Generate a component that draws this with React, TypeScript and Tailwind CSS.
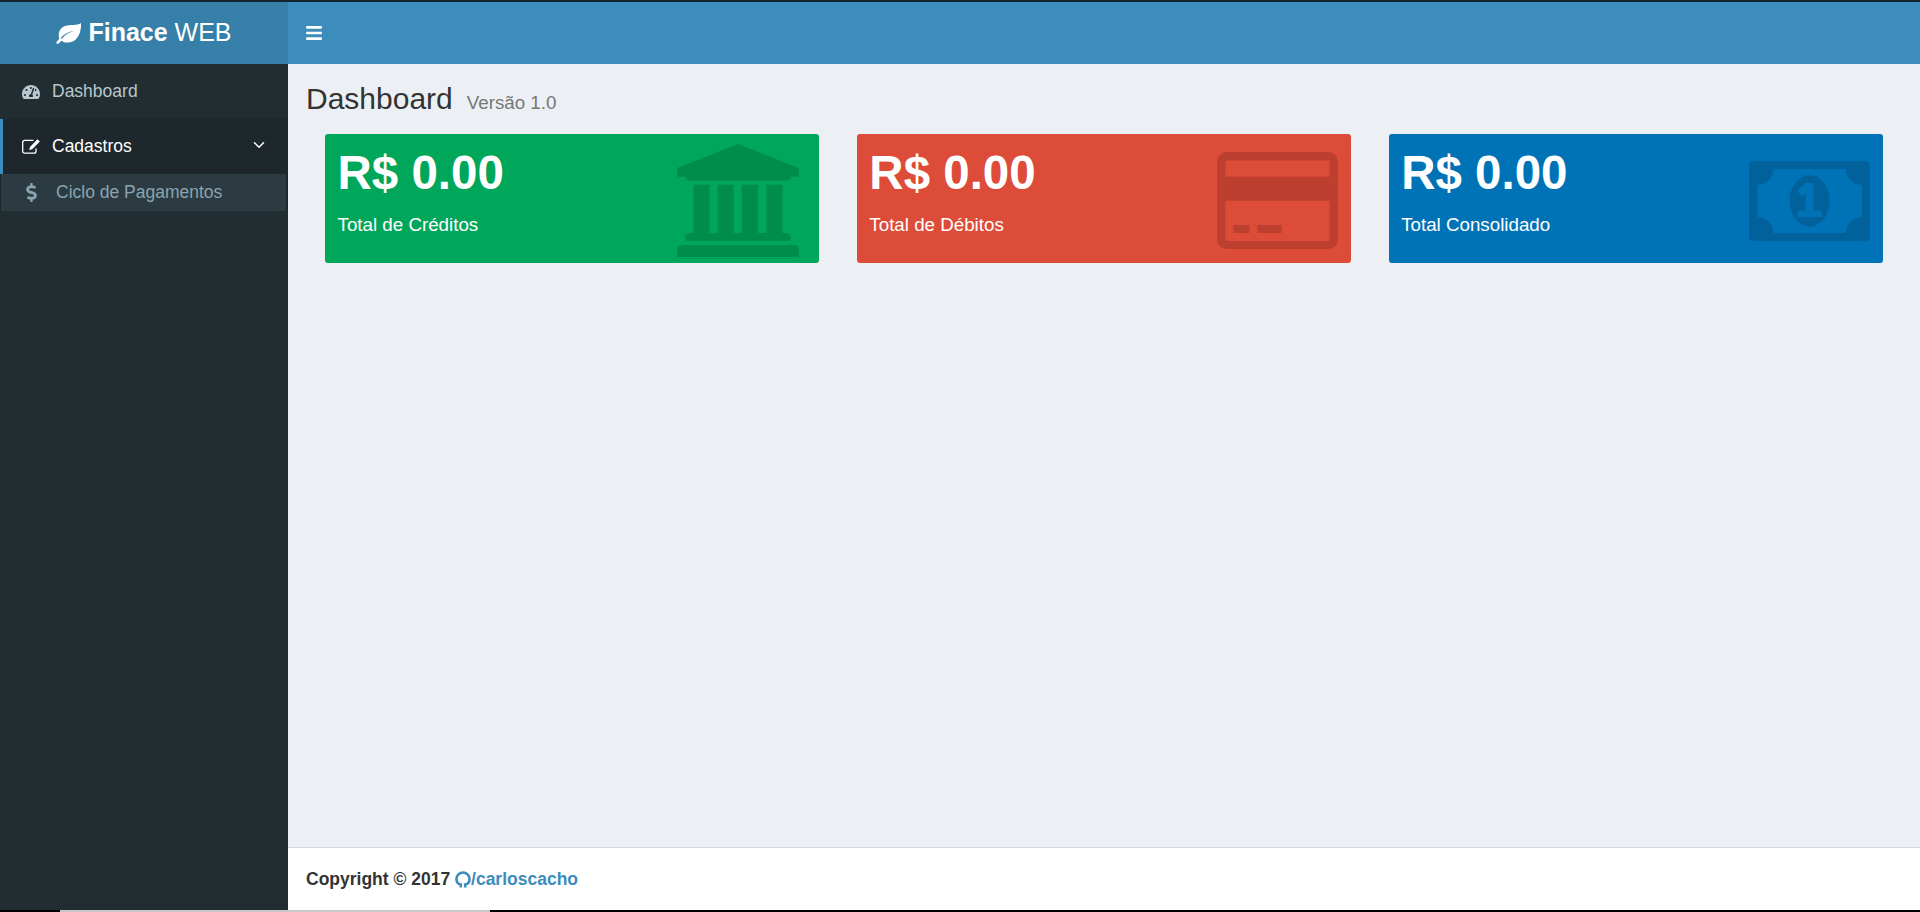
import { FaTachometerAlt, FaDollarSign, FaBars } from 'react-icons/fa'
import { LuChevronDown } from 'react-icons/lu'

function LeafIcon() {
  return (
    <svg viewBox="0 0 25 20" className="w-[25px] h-[21px]" preserveAspectRatio="none" fill="currentColor">
      <path
        fillRule="evenodd"
        d="M25 0C25.5 8 22 18 12.5 18.6C9.5 18.8 7.2 18 5.5 16.8C4 18 3 19.5 1.8 19.8C.5 20 0 18.8 .6 18C1.2 17.2 2.2 16.5 3.2 15C1.8 10 3.5 4.5 9 2.8C14.5 1.2 21 3 25 0ZM5.8 15.2C8.5 11.5 12 9 18 7.5C12.5 8 8 10.5 4.8 14.2Z"
      />
    </svg>
  )
}

function EditIcon() {
  return (
    <svg viewBox="0 0 18 15" className="w-[18px] h-[15px]" fill="none">
      <path d="M14 9.5V12.2C14 13.4 13.2 14.2 12 14.2H2.6C1.4 14.2 .7 13.4 .7 12.2V3.4C.7 2.2 1.4 1.4 2.6 1.4H11.5" stroke="currentColor" strokeWidth="1.3" />
      <path d="M15.4 .3L17.9 2.6L10.2 10.2L7.2 11L8 8Z" fill="currentColor" />
    </svg>
  )
}

function GithubIcon() {
  return (
    <svg viewBox="0 0 16 17" className="w-[16px] h-[17px]" fill="none">
      <path
        d="M5.8 16.5V13.6C3 13 1.5 10.5 1.5 8C1.5 4.4 4.4 1.5 8 1.5C11.6 1.5 14.5 4.4 14.5 8C14.5 10.5 13 13 10.2 13.6V16.5"
        stroke="currentColor"
        strokeWidth="2.6"
      />
    </svg>
  )
}

function BankIcon() {
  return (
    <svg viewBox="1073 73 364 338" className="w-[122px] h-[113px]" fill="currentColor">
      <path d="M1255 73L1437 145V171H1413C1413 178 1406 183 1400 183H1110C1104 183 1098 178 1098 171H1073V145Z" />
      <path d="M1122 195h48v144h-48zM1194 195h48v144h-48zM1266 195h49v144h-49zM1340 195h48v144h-48z" />
      <path d="M1110 339H1400C1407 339 1412 344 1412 351V363H1098V351C1098 344 1103 339 1110 339Z" />
      <path d="M1086 375H1424C1431 375 1437 381 1437 388V411H1073V388C1073 381 1079 375 1086 375Z" />
    </svg>
  )
}

function CardIcon() {
  return (
    <svg viewBox="1103 97 362 290" className="w-[121px] h-[97px]" fill="currentColor">
      <path
        fillRule="evenodd"
        d="M1133 97H1435C1452 97 1465 110 1465 127V357C1465 374 1452 387 1435 387H1133C1116 387 1103 374 1103 357V127C1103 110 1116 97 1133 97ZM1132 122C1130 122 1128 124 1128 126V171H1440V126C1440 124 1438 122 1436 122ZM1128 243V359C1128 361 1130 363 1132 363H1436C1438 363 1440 361 1440 359V243ZM1152 315h48v24h-48zM1224 315h72v24h-72z"
      />
    </svg>
  )
}

function MoneyIcon() {
  return (
    <svg viewBox="1072 122 351 241" preserveAspectRatio="none" className="w-[121px] h-[80px]" fill="currentColor">
      <path
        fillRule="evenodd"
        d="M1084 122H1411C1418 122 1423 127 1423 134V351C1423 358 1418 363 1411 363H1084C1077 363 1072 358 1072 351V134C1072 127 1077 122 1084 122ZM1143 146C1143 172 1122 194 1097 194V291C1122 291 1143 312 1143 339H1353C1353 312 1374 291 1400 291V194C1374 194 1353 172 1353 146Z"
      />
      <path
        fillRule="evenodd"
        d="M1248 164C1280 164 1306 199 1306 242C1306 285 1280 320 1248 320C1216 320 1190 285 1190 242C1190 199 1216 164 1248 164ZM1236 188L1212 212L1226 228L1236 218V272H1213V291H1283V272H1259V188Z"
      />
    </svg>
  )
}

const cards = [
  { value: 'R$ 0.00', label: 'Total de Créditos', bg: 'bg-[#00a65a]', icon: <BankIcon />, place: 'right-[20px] top-[10px]' },
  { value: 'R$ 0.00', label: 'Total de Débitos', bg: 'bg-[#dd4b39]', icon: <CardIcon />, place: 'right-[13px] top-[18px]' },
  { value: 'R$ 0.00', label: 'Total Consolidado', bg: 'bg-[#0073b7]', icon: <MoneyIcon />, place: 'right-[13px] top-[27px]' },
]

export default function App() {
  return (
    <div className="h-screen flex flex-col font-['Liberation_Sans',Arial,sans-serif] text-[17.5px] text-[#333] overflow-hidden bg-black">
      {/* faixa escura do topo */}
      <div className="h-[2px] shrink-0 bg-[#14242e]" />

      <div className="flex-1 flex min-h-0">
        <aside className="w-[288px] shrink-0 flex flex-col bg-[#222d32]">
          <div className="h-[62px] shrink-0 flex items-center justify-center gap-[7px] bg-[#367fa9] text-white text-[25px]">
            <LeafIcon />
            <span>
              <b>Finace</b> WEB
            </span>
          </div>
          <a className="h-[55px] flex items-center pl-[22px] text-[#b8c7ce]">
            <FaTachometerAlt className="w-[18px] h-[18px]" />
            <span className="ml-[12px]">Dashboard</span>
          </a>
          <a className="h-[55px] flex items-center pl-[19px] pr-[20px] border-l-[3px] border-[#3c8dbc] bg-[#1e282c] text-white">
            <EditIcon />
            <span className="ml-[12px] flex-1">Cadastros</span>
            <LuChevronDown className="w-[18px] h-[18px] -mt-1" />
          </a>
          <div className="pl-[1px] pr-[2px] bg-[#1e282c]">
            <a className="h-[37px] flex items-center pl-[25px] bg-[#2c3b41] text-[#8aa4af]">
              <FaDollarSign className="w-[11px] h-[19px]" />
              <span className="ml-[19px]">Ciclo de Pagamentos</span>
            </a>
          </div>
        </aside>

        <div className="flex-1 min-w-0 flex flex-col bg-[#ecf0f5]">
          <header className="h-[62px] shrink-0 flex items-center pl-[18px] bg-[#3c8dbc] text-white">
            <FaBars className="w-[16px] h-[18px]" />
          </header>

          <main className="flex-1 min-h-0">
            <div className="pt-[18px] pl-[18px] h-[70px] flex items-baseline">
              <h1 className="text-[30px] leading-[33px]">Dashboard</h1>
              <small className="ml-[14px] text-[18.75px] text-[#777]">Versão 1.0</small>
            </div>
            <div className="grid grid-cols-3 gap-[37.5px] pl-[37px] pr-[37px]">
              {cards.map((c) => (
                <div key={c.label} className={`relative h-[129px] rounded-[3px] p-[12.5px] text-white ${c.bg}`}>
                  <h3 className="text-[47.5px] leading-[52px] font-bold">{c.value}</h3>
                  <p className="mt-[13px] text-[18.75px] leading-[25px]">{c.label}</p>
                  <div className={`absolute text-black/15 ${c.place}`}>{c.icon}</div>
                </div>
              ))}
            </div>
          </main>

          <footer className="h-[63px] shrink-0 flex items-center pl-[18px] bg-white border-t border-[#d2d6de] font-bold">
            Copyright © 2017&nbsp;
            <a className="flex items-center text-[#3c8dbc]">
              <GithubIcon />
              /carloscacho
            </a>
          </footer>
        </div>
      </div>

      {/* faixa preta do rodapé */}
      <div className="h-[2px] shrink-0 flex bg-black">
        <div className="ml-[60px] w-[430px] bg-[#c8c8c8]" />
      </div>
    </div>
  )
}
